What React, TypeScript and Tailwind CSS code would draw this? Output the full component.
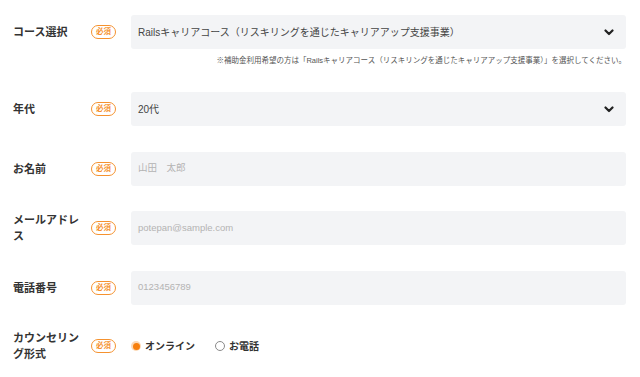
const font = { fontFamily: '"Liberation Sans", "Noto Sans CJK JP", sans-serif' };

function Badge() {
  return (
    <span className="flex h-[14px] w-[25px] shrink-0 items-center justify-center rounded-full border-[1.5px] border-[#f5922f] text-[7.5px] font-bold leading-none text-[#f5922f]">
      必須
    </span>
  );
}

function Chevron() {
  return (
    <svg width="10" height="7" viewBox="0 0 10 7" className="shrink-0">
      <polyline points="1.5,1.5 5,5 8.5,1.5" fill="none" stroke="#222" strokeWidth="2.2" strokeLinecap="round" strokeLinejoin="round" />
    </svg>
  );
}

function Row({ label, children }: { label: string; children: React.ReactNode }) {
  return (
    <div className="flex items-center">
      <div className="w-[70px] shrink-0 text-[11px] font-bold leading-[16px] text-[#333]">{label}</div>
      <div className="ml-[8px] mr-[15px]">
        <Badge />
      </div>
      <div className="flex-1">{children}</div>
    </div>
  );
}

function Select({ value }: { value: string }) {
  return (
    <div className="flex h-[34px] items-center justify-between rounded-[3px] bg-[#f3f4f6] pl-[7px] pr-[12px]">
      <span className="text-[10px] text-[#444]">{value}</span>
      <Chevron />
    </div>
  );
}

function Input({ placeholder }: { placeholder: string }) {
  return (
    <div className="flex h-[34px] items-center rounded-[3px] bg-[#f3f4f6] pl-[7px]">
      <span className="text-[9.5px] text-[#b3b3b3]">{placeholder}</span>
    </div>
  );
}

function Radio({ label, checked }: { label: string; checked?: boolean }) {
  return (
    <label className="flex items-center gap-[4px]">
      {checked ? (
        <span className="flex h-[10px] w-[10px] items-center justify-center rounded-full bg-[#fcd9b6]">
          <span className="h-[7px] w-[7px] rounded-full bg-[#f77f0d]" />
        </span>
      ) : (
        <span className="h-[10px] w-[10px] rounded-full border border-[#8a8a8a] bg-white" />
      )}
      <span className="text-[10px] font-bold text-[#333]">{label}</span>
    </label>
  );
}

export default function App() {
  return (
    <div className="h-[377px] w-[640px] overflow-hidden bg-white pl-[13px] pr-[14px] pt-[15px]" style={font}>
      <Row label="コース選択">
        <Select value="Railsキャリアコース（リスキリングを通じたキャリアアップ支援事業）" />
      </Row>
      <p className="mt-[6px] text-right text-[7.5px] leading-[11px] text-[#555]">
        ※補助金利用希望の方は「Railsキャリアコース（リスキリングを通じたキャリアアップ支援事業）」を選択してください。
      </p>
      <div className="mt-[26px] flex flex-col gap-[25.5px]">
        <Row label="年代">
          <Select value="20代" />
        </Row>
        <Row label="お名前">
          <Input placeholder="山田　太郎" />
        </Row>
        <Row label="メールアドレス">
          <Input placeholder="potepan@sample.com" />
        </Row>
        <Row label="電話番号">
          <Input placeholder="0123456789" />
        </Row>
        <Row label="カウンセリング形式">
          <div className="flex items-center gap-[20px]">
            <Radio label="オンライン" checked />
            <Radio label="お電話" />
          </div>
        </Row>
      </div>
    </div>
  );
}
